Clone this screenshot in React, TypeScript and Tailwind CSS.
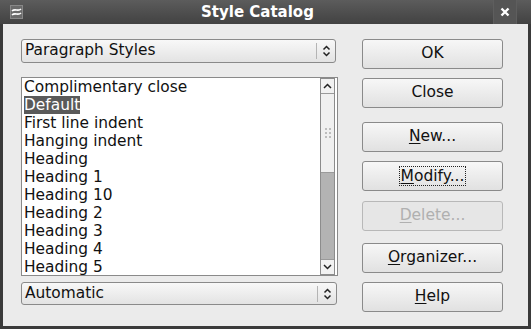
import React from "react";

const items = [
  "Complimentary close",
  "Default",
  "First line indent",
  "Hanging indent",
  "Heading",
  "Heading 1",
  "Heading 10",
  "Heading 2",
  "Heading 3",
  "Heading 4",
  "Heading 5",
];

function UpDown() {
  return (
    <svg width="9" height="14" viewBox="0 0 9 14" fill="none" stroke="#222" strokeWidth="1.5">
      <path d="M1.5 5.5 L4.5 2.5 L7.5 5.5" />
      <path d="M1.5 8.5 L4.5 11.5 L7.5 8.5" />
    </svg>
  );
}

function Combo({ label, className }: { label: string; className: string }) {
  return (
    <div
      className={`flex items-center rounded-[3px] border border-[#8a8a8a] bg-linear-to-b from-[#f8f8f8] to-[#e3e3e3] ${className}`}
    >
      <span className="flex-1 pl-[3px] leading-none">{label}</span>
      <span className="h-[16px] w-px bg-[#b4b4b4]" />
      <span className="flex w-[18px] justify-center">
        <UpDown />
      </span>
    </div>
  );
}

function Btn({
  children,
  className = "",
  disabled = false,
}: {
  children: React.ReactNode;
  className?: string;
  disabled?: boolean;
}) {
  return (
    <div
      className={`flex h-[30px] items-center justify-center rounded-[3px] border text-[15.5px] ${
        disabled
          ? "border-[#b8b8b8] bg-[#e6e6e6] text-[#b0b0b0]"
          : "border-[#8a8a8a] bg-linear-to-b from-[#f7f7f7] to-[#e1e1e1] text-[#111]"
      } ${className}`}
    >
      {children}
    </div>
  );
}

export default function App() {
  return (
    <div
      className="flex h-[329px] w-[531px] flex-col bg-[#3a3a3a] text-[15.4px] text-[#111]"
      style={{ fontFamily: '"DejaVu Sans", sans-serif' }}
    >
      {/* Title bar */}
      <div className="relative flex h-[24px] items-center bg-linear-to-b from-[#5c5c5c] to-[#424242]">
        <svg className="ml-[10px]" width="13" height="14" viewBox="0 0 13 14">
          <rect x="0" y="0" width="13" height="14" fill="#6a6a6a" />
          <rect x="0.5" y="0.5" width="12" height="13" fill="none" stroke="#888" />
          <path d="M2 6 C5 3, 8 7, 11 4" stroke="#fff" strokeWidth="1.6" fill="none" />
          <path d="M2 10 C5 7, 8 11, 11 8" stroke="#fff" strokeWidth="1.6" fill="none" />
        </svg>
        <div className="flex-1 pl-[178px] text-[15px] font-bold text-white">Style Catalog</div>
        <div className="mr-[14px] flex h-[24px] w-[24px] items-center justify-center border-x border-[#5e5e5e] bg-[#555]">
          <svg width="10" height="10" viewBox="0 0 10 10" stroke="#fff" strokeWidth="2.4">
            <path d="M1.5 1.5 L8.5 8.5 M8.5 1.5 L1.5 8.5" />
          </svg>
        </div>
      </div>

      {/* Body */}
      <div className="mx-[3px] mb-[3px] flex flex-1 bg-[#ebebeb] pl-[18px] pt-[15px]">
        {/* Left column */}
        <div className="flex w-[317px] flex-col">
          <Combo label="Paragraph Styles" className="h-[24px] w-[315px]" />
          <div className="mt-[14px] flex h-[199px] border border-[#8a8a8a] bg-white">
            <div className="flex-1 overflow-hidden pl-[2px]">
              {items.map((it) => (
                <div key={it} className="h-[18px] leading-[18px] whitespace-nowrap">
                  {it === "Default" ? (
                    <span className="bg-[#5a5a5a] text-white">{it}</span>
                  ) : (
                    it
                  )}
                </div>
              ))}
            </div>
            {/* Scrollbar */}
            <div className="mr-[2px] flex w-[15px] flex-col border border-[#8c8c8c] bg-[#b3b3b3]">
              <div className="flex h-[15px] items-center justify-center border-b border-[#9a9a9a] bg-[#f1f1f1]">
                <svg width="9" height="6" viewBox="0 0 9 6" fill="none" stroke="#222" strokeWidth="1.5">
                  <path d="M1 5 L4.5 1.5 L8 5" />
                </svg>
              </div>
              <div className="flex h-[79px] flex-col items-center justify-center gap-[2px] border-b border-[#9a9a9a] bg-[#f0f0f0]">
                {[0, 1, 2].map((i) => (
                  <div key={i} className="flex gap-[2px]">
                    <span className="h-[2px] w-[2px] bg-[#bdbdbd]" />
                    <span className="h-[2px] w-[2px] bg-[#bdbdbd]" />
                  </div>
                ))}
              </div>
              <div className="flex-1" />
              <div className="flex h-[15px] items-center justify-center border-t border-[#9a9a9a] bg-[#f1f1f1]">
                <svg width="9" height="6" viewBox="0 0 9 6" fill="none" stroke="#222" strokeWidth="1.5">
                  <path d="M1 1 L4.5 4.5 L8 1" />
                </svg>
              </div>
            </div>
          </div>
          <Combo label="Automatic" className="mt-[6px] h-[23px] w-[316px]" />
        </div>

        {/* Right column */}
        <div className="ml-[24px] flex w-[141px] flex-col">
          <Btn>OK</Btn>
          <Btn className="mt-[9px]">Close</Btn>
          <Btn className="mt-[14px]">
            <span>
              <span className="underline underline-offset-2">N</span>ew...
            </span>
          </Btn>
          <Btn className="mt-[9px]">
            <span className="border border-dotted border-[#222] px-[1px] leading-[18px]">
              <span className="underline underline-offset-2">M</span>odify...
            </span>
          </Btn>
          <Btn className="mt-[10px]" disabled>
            <span>
              <span className="underline underline-offset-2">D</span>elete...
            </span>
          </Btn>
          <Btn className="mt-[12px]">
            <span>
              <span className="underline underline-offset-2">O</span>rganizer...
            </span>
          </Btn>
          <Btn className="mt-[9px]">
            <span>
              <span className="underline underline-offset-2">H</span>elp
            </span>
          </Btn>
        </div>
      </div>
    </div>
  );
}
